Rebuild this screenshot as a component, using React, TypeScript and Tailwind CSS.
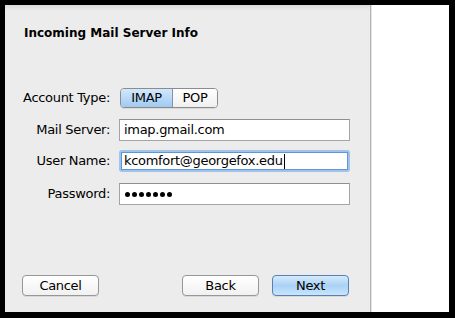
import React from "react";

const font = { fontFamily: '"DejaVu Sans", "Liberation Sans", sans-serif' };

const Field = ({ label, children }: { label: string; children: React.ReactNode }) => (
  <div className="flex items-center h-[22px]">
    <span className="w-[105px] text-right text-[13px] tracking-[-0.3px] text-black">{label}</span>
    <div className="ml-[9px]">{children}</div>
  </div>
);

const Button = ({ label, primary }: { label: string; primary?: boolean }) => (
  <div
    className={
      primary
        ? "w-[77px] h-[21px] rounded-[4px] border border-[#5a7fb3] bg-gradient-to-b from-[#d6ebfc] via-[#a9d2f6] to-[#c9e6fc] flex items-center justify-center text-[13px] tracking-[-0.3px] text-black shadow-[0_1px_0_rgba(0,0,0,0.08)]"
        : "w-[77px] h-[21px] rounded-[4px] border border-[#979797] bg-gradient-to-b from-white to-[#f1f1f1] flex items-center justify-center text-[13px] tracking-[-0.3px] text-black shadow-[0_1px_0_rgba(0,0,0,0.08)]"
    }
  >
    {label}
  </div>
);

export default function App() {
  return (
    <div className="w-[455px] h-[318px] bg-black pt-[5px] pl-[5px] pr-[6px] pb-[6px]" style={font}>
      <div className="flex h-full">
        {/* left gray pane */}
        <div className="w-[365px] h-full flex flex-col bg-gradient-to-b from-[#dcdcdc] via-[#ececec] via-[2%] to-[#ececec]">
          <h2 className="pl-[19px] pt-[20px] text-[12px] font-bold leading-[16px] text-black">
            Incoming Mail Server Info
          </h2>

          <div className="mt-[47px] flex flex-col">
            <div className="flex items-center h-[20px]">
              <span className="w-[105px] text-right text-[13px] tracking-[-0.3px] text-black">Account Type:</span>
              <div className="ml-[10px] flex h-[20px] rounded-[4px] border border-[#8c8c8c] overflow-hidden text-[13px] tracking-[-0.3px] shadow-[0_1px_0_rgba(0,0,0,0.08)]">
                <div className="w-[52px] flex items-center justify-center bg-gradient-to-b from-[#d3e8fb] to-[#9fcaf1] border-r border-[#7e95b3]">
                  IMAP
                </div>
                <div className="w-[44px] flex items-center justify-center bg-gradient-to-b from-white to-[#f0f0f0]">
                  POP
                </div>
              </div>
            </div>

            <div className="mt-[11px] flex flex-col gap-[9px]">
              <Field label="Mail Server:">
                <div className="w-[231px] h-[22px] border border-[#a3a3a3] border-t-[#8f8f8f] bg-white pl-[4px] flex items-center text-[13px] tracking-[-0.3px]">
                  imap.gmail.com
                </div>
              </Field>
              <Field label="User Name:">
                <div className="w-[231px] h-[22px] rounded-[3px] bg-[#9ec3ec] p-[2px]">
                  <div className="h-full border border-[#6495d0] bg-white pl-[2px] flex items-center text-[13px] tracking-[-0.3px]">
                    kcomfort@georgefox.edu
                    <span className="ml-[1px] w-[1px] h-[15px] bg-black" />
                  </div>
                </div>
              </Field>
              <div className="mt-[2px]">
                <Field label="Password:">
                  <div className="w-[231px] h-[22px] border border-[#a3a3a3] border-t-[#8f8f8f] bg-white pl-[5px] flex items-center gap-[2px]">
                    {[0, 1, 2, 3, 4, 5, 6].map((i) => (
                      <span key={i} className="w-[5px] h-[5px] rounded-full bg-black" />
                    ))}
                  </div>
                </Field>
              </div>
            </div>
          </div>

          <div className="mt-auto mb-[16px] flex justify-between pl-[17px] pr-[21px]">
            <Button label="Cancel" />
            <div className="flex gap-[13px]">
              <Button label="Back" />
              <Button label="Next" primary />
            </div>
          </div>
        </div>

        {/* divider */}
        <div className="w-[1px] h-full bg-[#b4b4b4]" />
        <div className="w-[1px] h-full bg-[#e4e4e4]" />

        {/* right white pane */}
        <div className="flex-1 h-full bg-white" />
      </div>
    </div>
  );
}
